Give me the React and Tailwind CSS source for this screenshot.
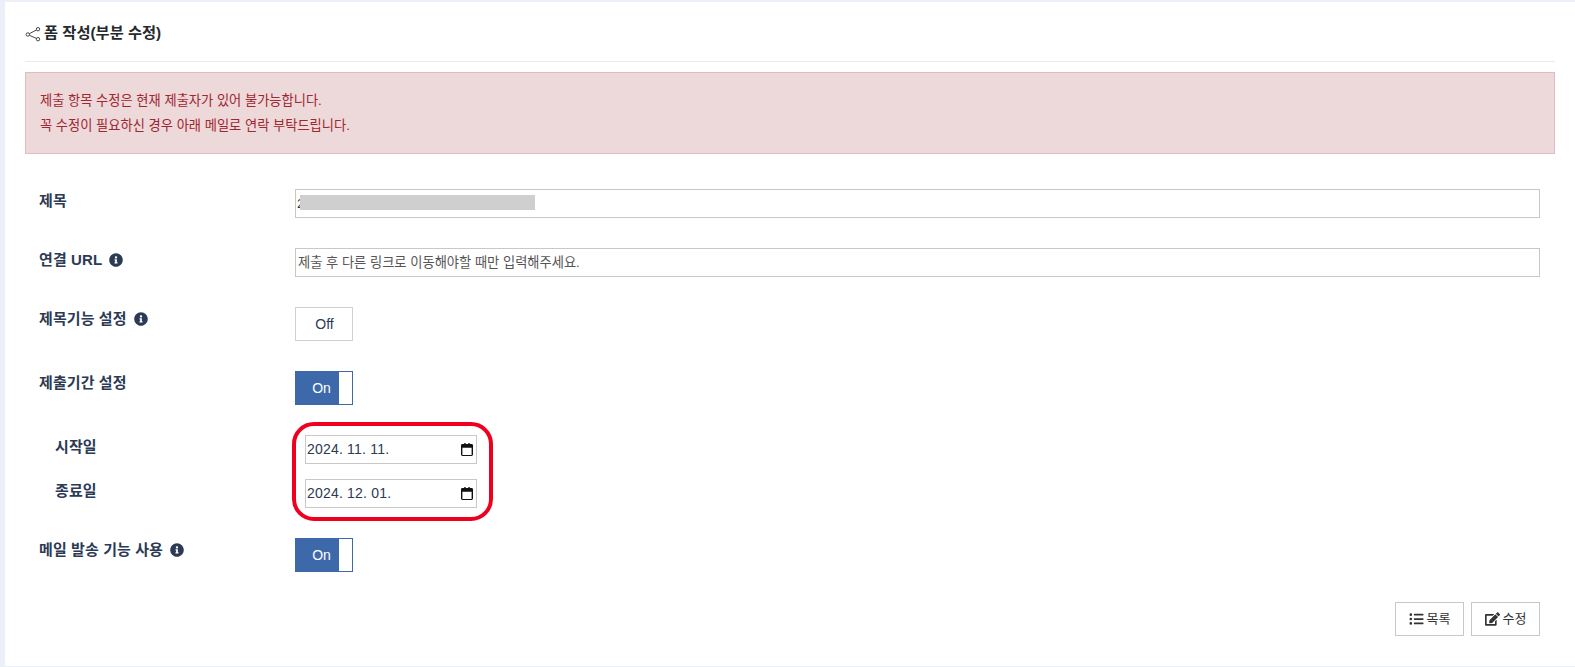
import React from "react";
import { FaInfoCircle, FaListUl, FaEdit } from "react-icons/fa";

const FONT = "font-['Liberation_Sans','Noto_Sans_CJK_KR',sans-serif]";

function Info() {
  return <FaInfoCircle className="ml-[7px] inline-block h-[14px] w-[14px] text-[#2c3a55]" />;
}

function Row({ label, info, sub, className = "mb-[30px]", children }) {
  return (
    <div className={`flex items-start ${className}`}>
      <div
        className={`flex h-[24px] shrink-0 items-center text-[15px] font-semibold leading-[24px] tracking-[0.1px] text-[#2c3a55] ${
          sub ? "w-[240px] pl-[16px]" : "w-[256px]"
        }`}
      >
        {label}
        {info && <Info />}
      </div>
      {children}
    </div>
  );
}

function Toggle({ on }) {
  if (on) {
    return (
      <div className="flex h-[34px] w-[58px] border border-[#3d69ab] bg-white">
        <div className="flex w-[43px] items-center justify-center bg-[#3d69ab] pl-[8px] text-[14px] text-white">On</div>
      </div>
    );
  }
  return (
    <div className="flex h-[34px] w-[58px] items-center justify-center border border-[#d0d0d0] bg-white pl-[1px] text-[14px] text-[#2c3a55]">
      Off
    </div>
  );
}

function DateField({ value }) {
  return (
    <div className="flex h-[29px] w-[172px] items-center justify-between border border-[#c8c8c8] bg-white pl-[1px] pr-[3px] text-[14px] tracking-[0.2px] text-[#2c3a55]">
      <span className="whitespace-pre">{value}</span>
      <svg width="12" height="13" viewBox="1.500 1 13 14" className="text-[#111]">
        <path
          fill="currentColor"
          d="M3 2h2V1h1.500v1h3V1H11v1h2c.8 0 1.500.7 1.500 1.500v10c0 .8-.7 1.500-1.500 1.500H3c-.8 0-1.500-.7-1.500-1.500v-10C1.500 2.700 2.200 2 3 2zm0 4v8h10V6H3z"
        />
      </svg>
    </div>
  );
}

export default function App() {
  return (
    <div className={`h-[667px] overflow-hidden bg-[#ebeff8] pb-[1px] pl-[5px] pt-[2px] ${FONT}`}>
      <div className="h-[664px] bg-white px-5">
        <div className="flex h-[60px] items-center gap-[3px] border-b border-[#e8eaec] pt-[4px] text-[15.3px] font-bold text-[#26292e]">
          <svg width="16" height="16" viewBox="0 0 16 16" fill="none" stroke="#333" strokeWidth="0.9">
            <circle cx="2.800" cy="8.500" r="1.700" />
            <circle cx="13" cy="3.200" r="1.700" />
            <circle cx="13" cy="13.200" r="1.700" />
            <path d="M4.300 7.700 11.500 4M4.300 9.300 11.500 12.400" />
          </svg>
          <span>폼 작성(부분 수정)</span>
        </div>

        <div className="mt-[10px] h-[82px] border border-[#e0bcc2] bg-[#edd8da] pl-[14px] pt-[15px] text-[13.25px] leading-[25px] text-[#a0262f]">
          <p>제출 항목 수정은 현재 제출자가 있어 불가능합니다.</p>
          <p>꼭 수정이 필요하신 경우 아래 메일로 연락 부탁드립니다.</p>
        </div>

        <div className="pl-[14px] pr-[15px] pt-[35px]">
          <Row label="제목">
            <div className="relative flex-1">
              <input
                readOnly
                value="2"
                className="block h-[29px] w-full border border-[#c8c8c8] bg-white pl-[1px] text-[13.33px] text-[#333] outline-none"
              />
              <div className="absolute left-[5px] top-[6px] h-[15px] w-[235px] bg-[#cfcfcf]" />
            </div>
          </Row>
          <Row label="연결 URL" info className="mb-[30px]">
            <input
              readOnly
              placeholder="제출 후 다른 링크로 이동해야할 때만 입력해주세요."
              className="block h-[29px] flex-1 border border-[#c8c8c8] bg-white pl-[2px] text-[13.25px] text-[#333] outline-none placeholder:text-[#555]"
            />
          </Row>
          <Row label="제목기능 설정" info>
            <Toggle />
          </Row>
          <Row label="제출기간 설정">
            <Toggle on />
          </Row>
          <div className="relative">
            <Row label="시작일" sub className="mb-[15px]">
              <div className="ml-[26px]">
                <DateField value="2024. 11. 11." />
              </div>
            </Row>
            <Row label="종료일" sub className="mb-[30px]">
              <div className="ml-[26px]">
                <DateField value="2024. 12. 01." />
              </div>
            </Row>
            <div className="pointer-events-none absolute left-[253px] top-[-13px] h-[99px] w-[201px] rounded-[22px] border-[4px] border-[#f0001f]" />
          </div>
          <Row label="메일 발송 기능 사용" info>
            <Toggle on />
          </Row>
          <div className="flex justify-end gap-[7px] text-[13px] text-[#333]">
            <button className="flex h-[34px] w-[69px] items-center justify-center gap-[3px] border border-[#c8c8c8] bg-white">
              <FaListUl className="h-[14px] w-[15px]" />
              목록
            </button>
            <button className="flex h-[34px] w-[69px] items-center justify-center gap-[3px] border border-[#c8c8c8] bg-white">
              <FaEdit className="h-[14px] w-[15px]" />
              수정
            </button>
          </div>
        </div>
      </div>
    </div>
  );
}
